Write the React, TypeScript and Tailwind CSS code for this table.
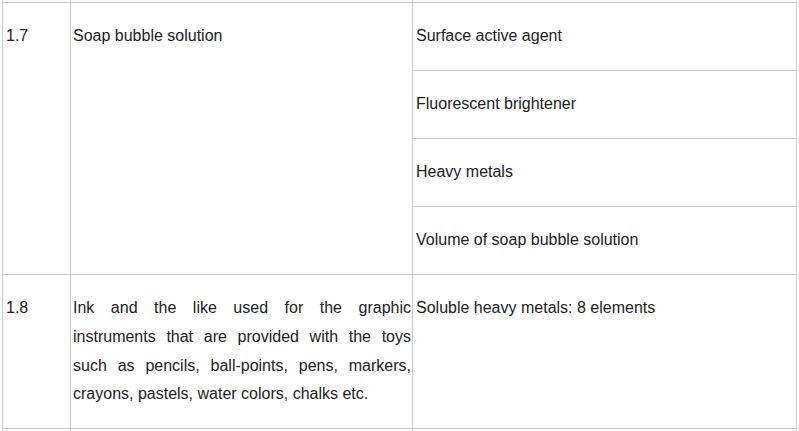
const SOAP_CHECKS = [
  'Surface active agent',
  'Fluorescent brightener',
  'Heavy metals',
  'Volume of soap bubble solution',
];

export default function App() {
  return (
    <div
      className="bg-white text-[16px] leading-[28.8px] text-[#222]"
      style={{ fontFamily: '"Liberation Sans", Arial, sans-serif' }}
    >
      <div className="ml-[2px] grid w-[795px] grid-cols-[67px_341px_383px] gap-px bg-[#ccc] px-px">
        {/* tail of the row above */}
        <div className="h-[2px] bg-white" />
        <div className="h-[2px] bg-white" />
        <div className="h-[2px] bg-white" />

        {/* 1.7 */}
        <div className="bg-white pl-[3px] pt-[19px]">1.7</div>
        <div className="bg-white pl-[2px] pt-[19px]">Soap bubble solution</div>
        <div className="flex flex-col gap-px bg-[#ccc]">
          {SOAP_CHECKS.map((item) => (
            <div key={item} className="h-[67px] bg-white pl-[3px] pt-[19px]">
              {item}
            </div>
          ))}
        </div>

        {/* 1.8 */}
        <div className="h-[153px] bg-white pl-[3px] pt-[19px]">1.8</div>
        <div className="h-[153px] bg-white pl-[2px] pr-[1px] pt-[19px] text-justify">
          Ink and the like used for the graphic instruments that are provided with the toys
          such as pencils, ball-points, pens, markers, crayons, pastels, water colors, chalks
          etc.
        </div>
        <div className="h-[153px] bg-white pl-[3px] pt-[19px]">
          Soluble heavy metals: 8 elements
        </div>

        {/* start of the next row */}
        <div className="h-[2px] bg-white" />
        <div className="h-[2px] bg-white" />
        <div className="h-[2px] bg-white" />
      </div>
    </div>
  );
}
